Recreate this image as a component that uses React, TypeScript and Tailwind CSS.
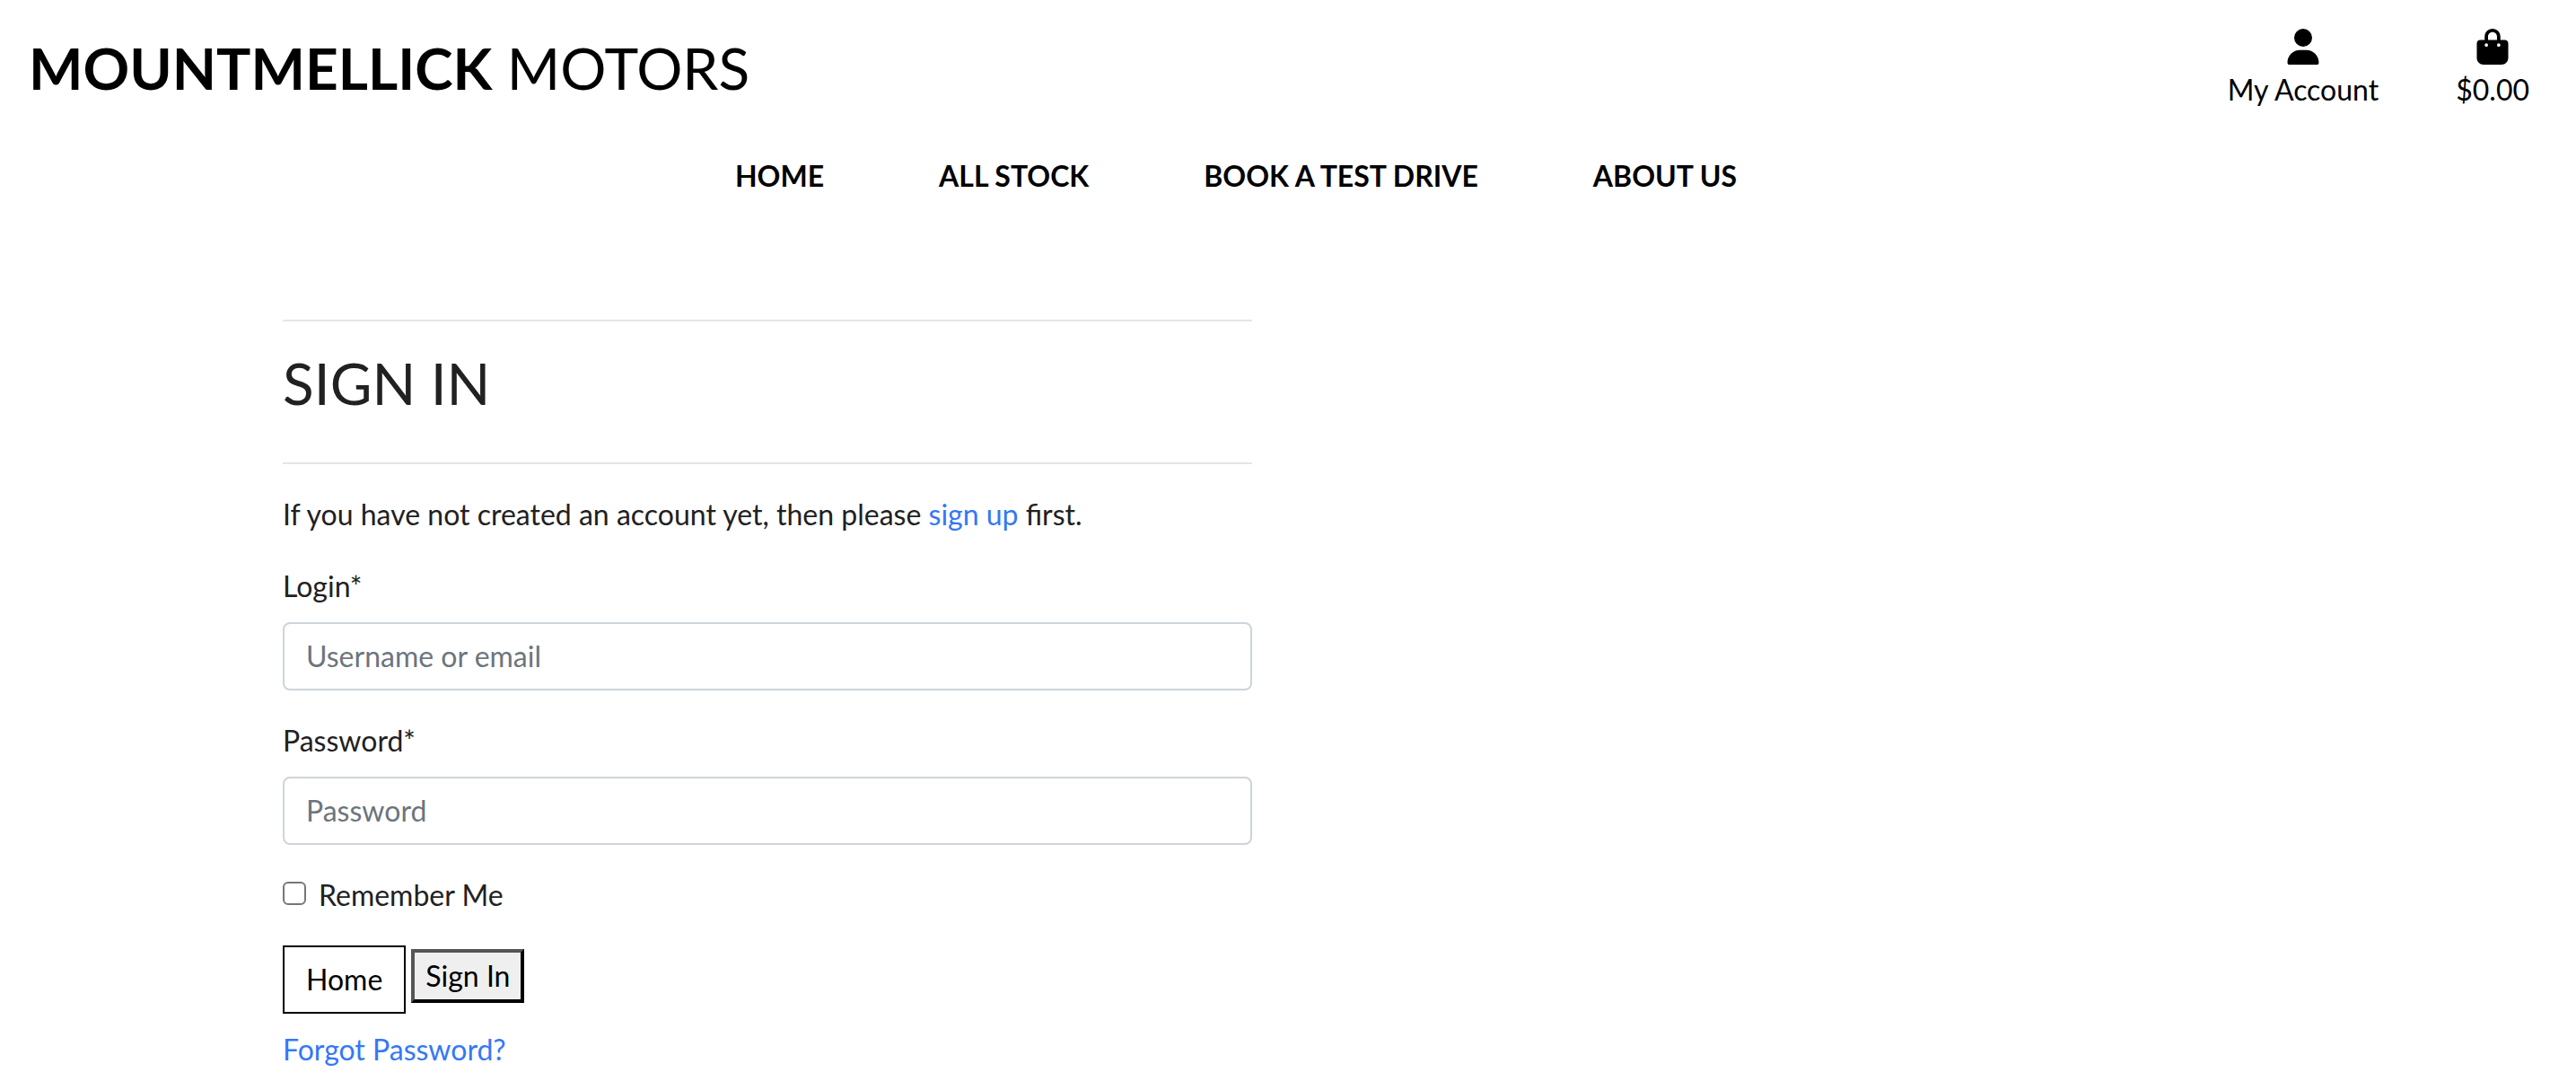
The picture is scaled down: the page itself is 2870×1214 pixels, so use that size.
import type { ComponentProps } from "react";
import { FaBagShopping, FaUser } from "react-icons/fa6";

const navLinks = ["HOME", "ALL STOCK", "BOOK A TEST DRIVE", "ABOUT US"];

function Header() {
  return (
    <header className="text-black">
      <div className="flex items-start justify-between pt-8 pr-[52px] pl-8">
        <a href="#" className="text-[64px] leading-[88px]">
          <strong className="font-bold">MOUNTMELLICK</strong> MOTORS
        </a>
        <div className="flex gap-[86px]">
          <a href="#" className="flex flex-col items-center">
            <FaUser className="h-10 w-auto" aria-hidden="true" />
            <span className="mt-1">My Account</span>
          </a>
          <a href="#" className="flex flex-col items-center">
            <FaBagShopping className="h-10 w-auto" aria-hidden="true" />
            <span className="mt-1">$0.00</span>
          </a>
        </div>
      </div>
      <nav className="mt-12 pr-[116px]">
        <ul className="flex justify-center gap-32 font-bold">
          {navLinks.map((label) => (
            <li key={label}>
              <a href="#">{label}</a>
            </li>
          ))}
        </ul>
      </nav>
    </header>
  );
}

function Field({ id, label, ...input }: { id: string; label: string } & ComponentProps<"input">) {
  return (
    <div className="mb-8">
      <label htmlFor={id} className="mb-4 block">
        {label}
      </label>
      <input
        id={id}
        className="block w-full rounded-lg border-2 border-[#ced4da] bg-white px-6 py-3 placeholder:text-[#6c757d]"
        {...input}
      />
    </div>
  );
}

export default function App() {
  return (
    <div className="min-h-screen bg-white font-[Lato,sans-serif] text-[32px] leading-[48px] text-[#212121]">
      <Header />
      <main className="mx-auto mt-[136px] grid max-w-[2240px] grid-cols-2 gap-20">
        <section>
          <hr className="border-t-2 border-[#e5e5e5]" />
          <h1 className="mt-8 mb-[51px] text-[64px] leading-[74px]">SIGN IN</h1>
          <hr className="border-t-2 border-[#e5e5e5]" />
          <p className="my-8">
            If you have not created an account yet, then please{" "}
            <a href="#" className="text-[#3478f6]">
              sign up
            </a>{" "}
            first.
          </p>
          <form onSubmit={(event) => event.preventDefault()}>
            <Field id="login" label="Login*" type="text" placeholder="Username or email" />
            <Field id="password" label="Password*" type="password" placeholder="Password" />
            <div className="mb-8 flex items-start">
              <input
                id="remember"
                type="checkbox"
                className="mt-[9px] size-[26px] appearance-none rounded-md border-2 border-[#767676] bg-white checked:bg-[#3478f6]"
              />
              <label htmlFor="remember" className="pl-3.5">
                Remember Me
              </label>
            </div>
            <div className="mb-4 flex items-start gap-1.5">
              <a href="#" className="border-2 border-black px-6 py-3 text-black">
                Home
              </a>
              <button
                type="submit"
                className="mt-1 border-4 border-t-[#555555] border-r-black border-b-black border-l-[#555555] bg-[#efefef] px-3 py-0.5 text-black"
              >
                Sign In
              </button>
            </div>
            <a href="#" className="text-[#3478f6]">
              Forgot Password?
            </a>
          </form>
        </section>
      </main>
    </div>
  );
}
